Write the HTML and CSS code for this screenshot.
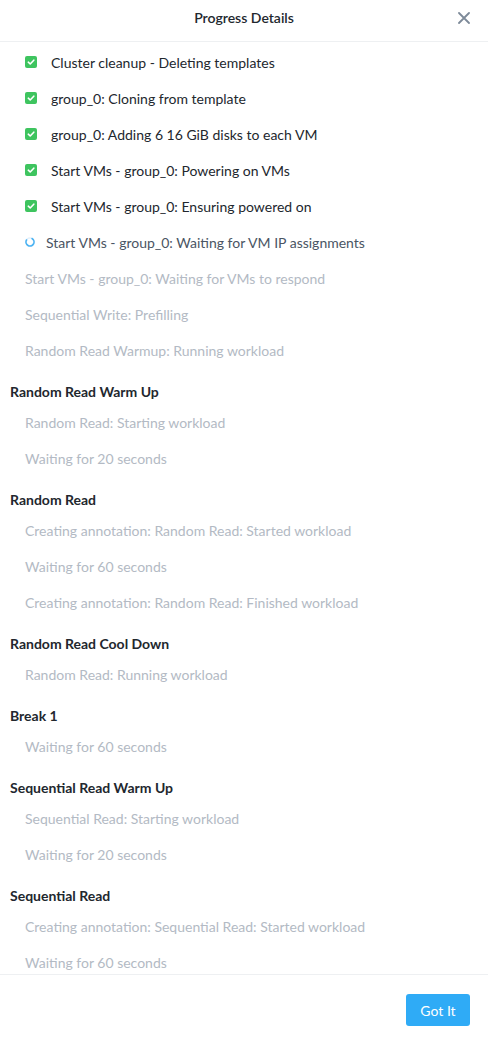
FILE: index.html
```html
<!DOCTYPE html>
<html>
<head>
<meta charset="utf-8">
<link rel="stylesheet" href="styles.css">
</head>
<body>
<div class="modal">
  <header class="header">
    <div class="title">Progress Details</div>
    <svg class="close" width="12" height="12" viewBox="0 0 12 12"><path d="M1 1L11 11M11 1L1 11" stroke="#7d8a99" stroke-width="1.8" stroke-linecap="round"/></svg>
  </header>
  <div class="body">
    <div class="item done"><span class="check"><svg width="12" height="12" viewBox="0 0 12 12"><path d="M3.3 6.2L5.2 8L8.8 4.2" fill="none" stroke="#fff" stroke-width="1.6" stroke-linecap="round" stroke-linejoin="round"/></svg></span>Cluster cleanup - Deleting templates</div>
    <div class="item done"><span class="check"><svg width="12" height="12" viewBox="0 0 12 12"><path d="M3.3 6.2L5.2 8L8.8 4.2" fill="none" stroke="#fff" stroke-width="1.6" stroke-linecap="round" stroke-linejoin="round"/></svg></span>group_0: Cloning from template</div>
    <div class="item done"><span class="check"><svg width="12" height="12" viewBox="0 0 12 12"><path d="M3.3 6.2L5.2 8L8.8 4.2" fill="none" stroke="#fff" stroke-width="1.6" stroke-linecap="round" stroke-linejoin="round"/></svg></span>group_0: Adding 6 16 GiB disks to each VM</div>
    <div class="item done"><span class="check"><svg width="12" height="12" viewBox="0 0 12 12"><path d="M3.3 6.2L5.2 8L8.8 4.2" fill="none" stroke="#fff" stroke-width="1.6" stroke-linecap="round" stroke-linejoin="round"/></svg></span>Start VMs - group_0: Powering on VMs</div>
    <div class="item done"><span class="check"><svg width="12" height="12" viewBox="0 0 12 12"><path d="M3.3 6.2L5.2 8L8.8 4.2" fill="none" stroke="#fff" stroke-width="1.6" stroke-linecap="round" stroke-linejoin="round"/></svg></span>Start VMs - group_0: Ensuring powered on</div>
    <div class="item running"><svg class="spin" width="10" height="10" viewBox="0 0 10 10"><circle cx="5" cy="5" r="4" fill="none" stroke="#e3f1fc" stroke-width="1.6"/><path d="M5 1A4 4 0 1 0 9 5" fill="none" stroke="#4db3f2" stroke-width="1.6" stroke-linecap="round" transform="rotate(-60 5 5)"/></svg>Start VMs - group_0: Waiting for VM IP assignments</div>
    <div class="item pending">Start VMs - group_0: Waiting for VMs to respond</div>
    <div class="item pending">Sequential Write: Prefilling</div>
    <div class="item pending">Random Read Warmup: Running workload</div>
    <div class="group">Random Read Warm Up</div>
    <div class="item pending">Random Read: Starting workload</div>
    <div class="item pending">Waiting for 20 seconds</div>
    <div class="group">Random Read</div>
    <div class="item pending">Creating annotation: Random Read: Started workload</div>
    <div class="item pending">Waiting for 60 seconds</div>
    <div class="item pending">Creating annotation: Random Read: Finished workload</div>
    <div class="group">Random Read Cool Down</div>
    <div class="item pending">Random Read: Running workload</div>
    <div class="group">Break 1</div>
    <div class="item pending">Waiting for 60 seconds</div>
    <div class="group">Sequential Read Warm Up</div>
    <div class="item pending">Sequential Read: Starting workload</div>
    <div class="item pending">Waiting for 20 seconds</div>
    <div class="group">Sequential Read</div>
    <div class="item pending">Creating annotation: Sequential Read: Started workload</div>
    <div class="item pending">Waiting for 60 seconds</div>
  </div>
  <footer class="footer">
    <button class="btn">Got It</button>
  </footer>
</div>
</body>
</html>
```
FILE: styles.css
```css
html, body {
  margin: 0;
  padding: 0;
  background: #fff;
}
body {
  font-family: Lato, "Open Sans", sans-serif;
  font-size: 14px;
  color: #22272e;
}
.modal {
  width: 488px;
  height: 1039px;
  display: flex;
  flex-direction: column;
  overflow: hidden;
}
.header {
  height: 42px;
  flex: none;
  display: flex;
  align-items: center;
  justify-content: center;
  border-bottom: 1px solid #eef0f2;
  position: relative;
  box-sizing: border-box;
  padding-bottom: 6px;
}
.title {
  font-weight: 600;
  font-size: 14px;
  color: #22272e;
}
.close {
  position: absolute;
  right: 18px;
  top: 12px;
}
.body {
  flex: 1;
  overflow: hidden;
  padding-top: 2px;
}
.item {
  height: 36px;
  display: flex;
  align-items: center;
  padding-left: 25px;
  font-size: 14px;
  white-space: nowrap;
}
.item.done { color: #22272e; }
.item.running { color: #4a5564; }
.item.pending { color: #b3bac4; }
.check {
  flex: none;
  width: 12px;
  height: 12px;
  background: #3ec45f;
  border-radius: 2px;
  display: inline-flex;
  margin-right: 14px;
}
.spin {
  flex: none;
  margin-right: 11px;
}
.group {
  height: 36px;
  box-sizing: border-box;
  padding: 15px 0 0 10px;
  font-weight: 700;
  font-size: 14px;
  line-height: 18px;
  color: #22272e;
}
.footer {
  flex: none;
  height: 65px;
  border-top: 1px solid #eef0f2;
  display: flex;
  align-items: flex-start;
  justify-content: flex-end;
  padding: 19px 18px 0 0;
  box-sizing: border-box;
}
.btn {
  width: 64px;
  height: 32px;
  border: none;
  border-radius: 3px;
  background: #2fabf6;
  color: #fff;
  font-family: Lato, "Open Sans", sans-serif;
  font-size: 14px;
  padding: 0;
}
```
